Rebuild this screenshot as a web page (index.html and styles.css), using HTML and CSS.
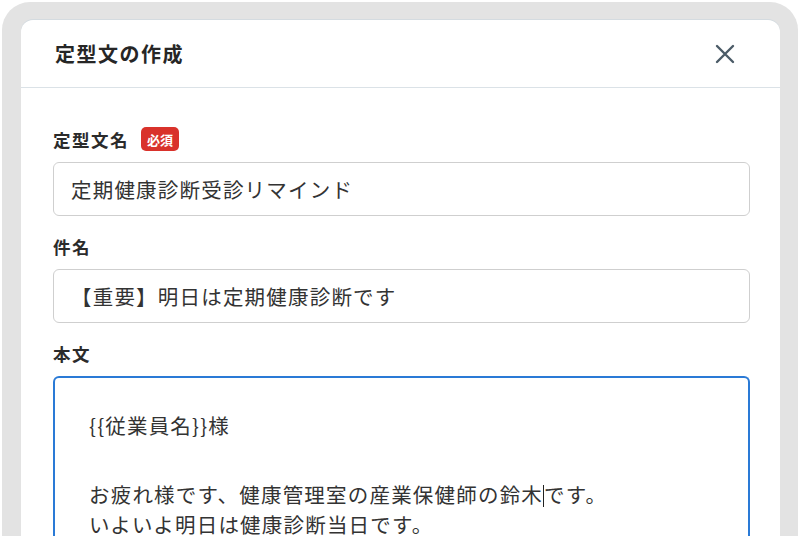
FILE: index.html
```html
<!DOCTYPE html>
<html lang="ja">
<head>
    <meta charset="UTF-8">
    <meta name="viewport" content="width=device-width, initial-scale=1.0">
    <title>定型文の作成</title>
    <link rel="stylesheet" href="styles.css">
</head>
<body>

    <div class="marco">
        <div class="modal">
            <!-- Cabecera del modal -->
            <div class="modal-header">
                <h1 class="modal-titulo">定型文の作成</h1>
                <button class="btn-cerrar" aria-label="閉じる">
                    <svg width="22" height="22" viewBox="0 0 22 22">
                        <path d="M3 3 L19 19 M19 3 L3 19" stroke="#4b5b67" stroke-width="2.4" stroke-linecap="round" fill="none"/>
                    </svg>
                </button>
            </div>

            <div class="modal-cuerpo">
                <div class="campo">
                    <div class="etiqueta">定型文名 <span class="obligatorio">必須</span></div>
                    <div class="entrada">定期健康診断受診リマインド</div>
                </div>

                <div class="campo">
                    <div class="etiqueta">件名</div>
                    <div class="entrada">【重要】明日は定期健康診断です</div>
                </div>

                <div class="campo">
                    <div class="etiqueta">本文</div>
                    <div class="area-texto">
                        <p>{{従業員名}}様</p>
                        <p>お疲れ様です、健康管理室の産業保健師の鈴木<span class="cursor"></span>です。<br>いよいよ明日は健康診断当日です。</p>
                    </div>
                </div>
            </div>
        </div>
    </div>

</body>
</html>
```

FILE: styles.css
```css
body {
    font-family: 'Noto Sans CJK JP', 'Noto Sans', sans-serif;
    background-color: #fff;
    margin: 0;
    padding: 0;
    height: 536px;
    overflow: hidden;
}

/* Marco gris redondeado alrededor del modal */
.marco {
    margin: 2px 2px 0 2px;
    padding: 18px 18px 0 19px;
    height: 534px;
    box-sizing: border-box;
    background-color: #e3e3e3;
    border-radius: 28px 28px 0 0;
    display: flex;
}

.modal {
    flex: 1;
    background-color: #fff;
    border-radius: 12px 12px 0 0;
    box-shadow: 0 -1px 0 #d4dbe0;
    overflow: hidden;
}

.modal-header {
    height: 67px;
    display: flex;
    align-items: center;
    justify-content: space-between;
    padding: 0 44px 0 34px;
    border-bottom: 1px solid #dbe2e7;
}

.modal-titulo {
    margin: 0;
    font-size: 20px;
    font-weight: 700;
    color: #262626;
    letter-spacing: 1.5px;
}

.btn-cerrar {
    background: none;
    border: none;
    padding: 0;
    width: 22px;
    height: 22px;
    cursor: pointer;
}

.modal-cuerpo {
    padding: 39px 30px 0 32px;
}

.campo {
    margin-bottom: 18px;
}

.etiqueta {
    height: 24px;
    display: flex;
    align-items: center;
    gap: 12px;
    font-size: 17.5px;
    font-weight: 700;
    color: #2b2b2b;
    letter-spacing: 1.5px;
    margin-bottom: 11px;
}

.obligatorio {
    display: inline-flex;
    align-items: center;
    justify-content: center;
    width: 38px;
    height: 24px;
    background-color: #d9322b;
    color: #fff;
    font-size: 13px;
    font-weight: 700;
    letter-spacing: 0;
    border-radius: 5px;
}

.entrada {
    height: 54px;
    box-sizing: border-box;
    display: flex;
    align-items: center;
    padding: 0 17px;
    border: 1px solid #cfcfcf;
    border-radius: 6px;
    font-size: 20.5px;
    letter-spacing: 1.2px;
    color: #333;
}

/* Área del cuerpo del mensaje en foco */
.area-texto {
    border: 2px solid #2a7ad6;
    border-bottom: none;
    border-radius: 6px 6px 0 0;
    padding: 33px 34px 0 34px;
    height: 160px;
    box-sizing: border-box;
    font-size: 20.5px;
    line-height: 28px;
    letter-spacing: 1.2px;
    color: #333;
}

.area-texto p {
    margin: 0 0 40px 0;
}

.area-texto p + p {
    line-height: 30px;
}

.cursor {
    display: inline-block;
    width: 0;
    height: 22px;
    border-left: 1.5px solid #222;
    vertical-align: -4px;
}
```
